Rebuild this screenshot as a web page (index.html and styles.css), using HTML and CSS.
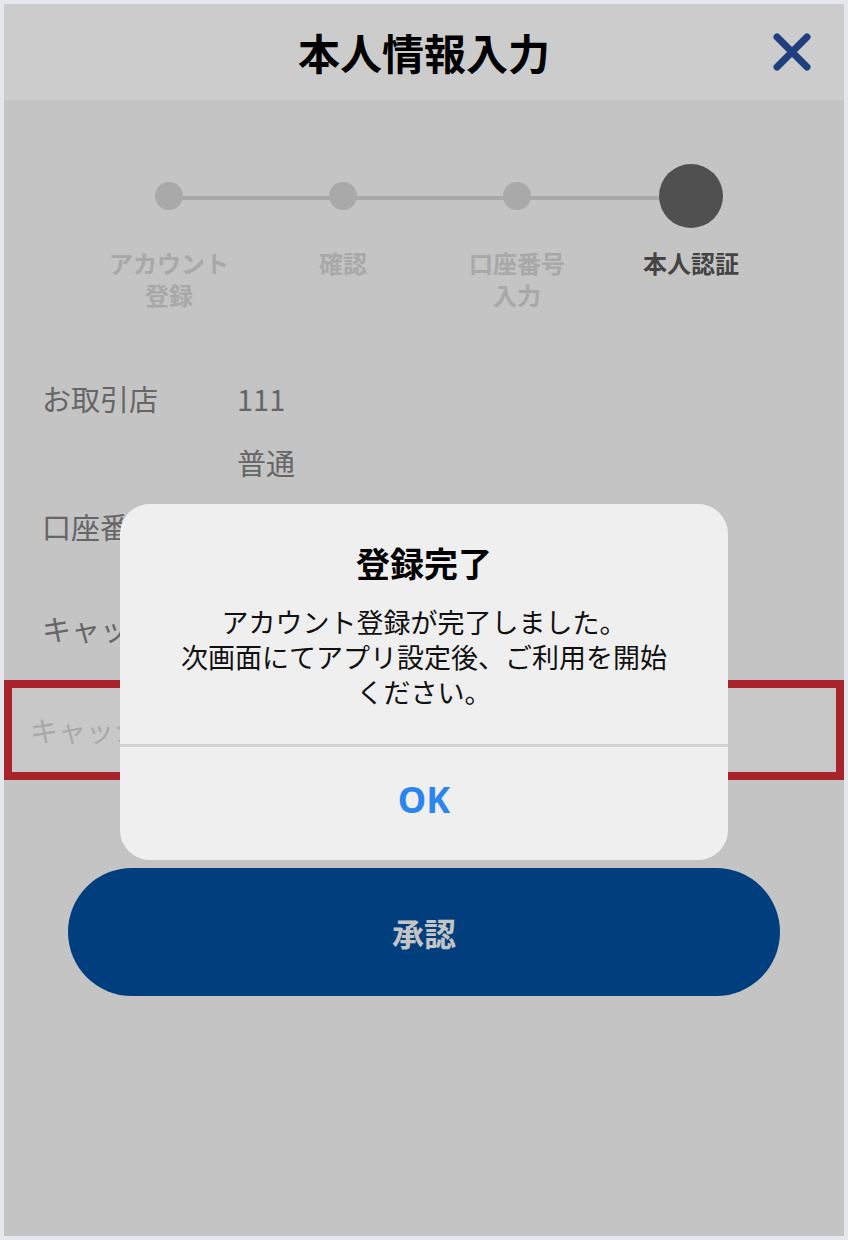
FILE: index.html
```html
<!DOCTYPE html>
<html lang="ja">
<head>
<meta charset="UTF-8" />
<meta name="viewport" content="width=device-width, initial-scale=1" />
<title>本人情報入力</title>
<link rel="stylesheet" href="styles.css">
</head>
<body>

<div class="app">
  <header class="topbar">
    <span></span>
    <h1>本人情報入力</h1>
    <button class="close" aria-label="閉じる">
      <svg width="38" height="38" viewBox="0 0 38 38">
        <path d="M4 4 L34 34 M34 4 L4 34" stroke="#274f9f" stroke-width="7" stroke-linecap="round" fill="none" />
      </svg>
    </button>
  </header>

  <ol class="stepper">
    <li class="step"><span class="dot-box"><span class="dot"></span></span><span class="step-label">アカウント<br>登録</span></li>
    <li class="step"><span class="dot-box"><span class="dot"></span></span><span class="step-label">確認</span></li>
    <li class="step"><span class="dot-box"><span class="dot"></span></span><span class="step-label">口座番号<br>入力</span></li>
    <li class="step active"><span class="dot-box"><span class="dot"></span></span><span class="step-label">本人認証</span></li>
  </ol>

  <div class="info">
    <div class="info-row">
      <div class="info-label">お取引店</div>
      <div class="info-value">
        <div>111</div>
        <div>普通</div>
      </div>
    </div>
    <div class="info-row">
      <div class="info-label">口座番号</div>
      <div class="info-value"></div>
    </div>
    <div class="info-row pin-label">
      <div class="info-label">キャッシュカード暗証番号</div>
    </div>
  </div>

  <input type="password" class="pin-input" placeholder="キャッシュカード暗証番号(4桁)" autocomplete="off" />

  <button class="submit">承認</button>

  <div class="overlay">
    <div class="dialog">
      <div class="dialog-body">
        <h2>登録完了</h2>
        <p>アカウント登録が完了しました。<br>次画面にてアプリ設定後、ご利用を開始ください。</p>
      </div>
      <button class="dialog-ok">OK</button>
    </div>
  </div>
</div>

</body>
</html>
```

FILE: styles.css
```css
* {
  box-sizing: border-box;
}
body {
  margin: 0;
  background: #e4e8ec;
  font-family: "Noto Sans CJK JP", "Noto Sans", sans-serif;
}
.app {
  position: relative;
  width: 840px;
  height: 1232px;
  margin: 4px;
  background: #f5f5f5;
  overflow: hidden;
}
.topbar {
  height: 96px;
  background: #fff;
  display: grid;
  grid-template-columns: 1fr auto 1fr;
  align-items: center;
}
.topbar h1 {
  margin: 0;
  font-size: 42px;
  line-height: 1;
  font-weight: 700;
  color: #000;
}
.close {
  justify-self: end;
  margin-right: 33px;
  padding: 0;
  border: none;
  background: none;
  display: flex;
}

/* stepper */
.stepper {
  position: relative;
  list-style: none;
  margin: 64px 0 0;
  padding: 0 66px 0 78px;
  display: grid;
  grid-template-columns: repeat(4, 1fr);
}
.stepper::before {
  content: "";
  position: absolute;
  top: 32px;
  left: 165px;
  right: 153px;
  height: 4px;
  background: #d4d4d4;
}
.step {
  display: flex;
  flex-direction: column;
  align-items: center;
}
.dot-box {
  position: relative;
  height: 64px;
  display: flex;
  align-items: center;
}
.dot {
  width: 28px;
  height: 28px;
  border-radius: 50%;
  background: #d4d4d4;
}
.step.active .dot {
  width: 64px;
  height: 64px;
  background: #656565;
}
.step-label {
  margin-top: 19px;
  font-size: 24px;
  line-height: 32px;
  font-weight: 700;
  color: #d2d2d2;
  text-align: center;
}
.step.active .step-label {
  color: #555;
}

/* info rows */
.info {
  margin-top: 67px;
  padding-left: 38px;
  display: flex;
  flex-direction: column;
  gap: 24px;
  font-size: 29px;
  line-height: 40px;
  color: #808080;
}
.info-row {
  display: grid;
  grid-template-columns: 195px 1fr;
}
.info-value {
  display: flex;
  flex-direction: column;
  gap: 24px;
}
.pin-label {
  margin-top: 38px;
  grid-template-columns: 1fr;
}
.pin-input {
  display: block;
  width: 840px;
  height: 100px;
  margin-top: 32px;
  padding: 0 18px;
  border: 8px solid #d22d35;
  background: #fbfbfb;
  font-family: inherit;
  font-size: 28px;
  outline: none;
}
.pin-input::placeholder {
  color: #d3d3d3;
}
.submit {
  display: block;
  width: 712px;
  height: 128px;
  margin: 88px 64px 0;
  border: none;
  border-radius: 64px;
  background: #004e9e;
  color: #f6f6f6;
  font-family: inherit;
  font-size: 32px;
  font-weight: 700;
}

/* dialog */
.overlay {
  position: absolute;
  inset: 0;
  background: rgba(0, 0, 0, 0.2);
  display: flex;
  justify-content: center;
  align-items: flex-start;
  padding-top: 500px;
}
.dialog {
  width: 608px;
  background: #efefef;
  border-radius: 30px;
  text-align: center;
  overflow: hidden;
}
.dialog-body {
  padding: 37px 54px 35px;
  border-bottom: 3px solid #d4d4d4;
}
.dialog h2 {
  margin: 0;
  font-size: 34px;
  line-height: 44px;
  font-weight: 700;
  color: #000;
}
.dialog p {
  margin: 19px 0 0;
  font-size: 27px;
  line-height: 35px;
  color: #111;
}
.dialog-ok {
  display: block;
  width: 100%;
  height: 113px;
  padding: 0 0 9px;
  border: none;
  background: none;
  font-family: "Noto Sans", sans-serif;
  font-size: 36px;
  font-weight: 700;
  color: #2b85ee;
}
```
